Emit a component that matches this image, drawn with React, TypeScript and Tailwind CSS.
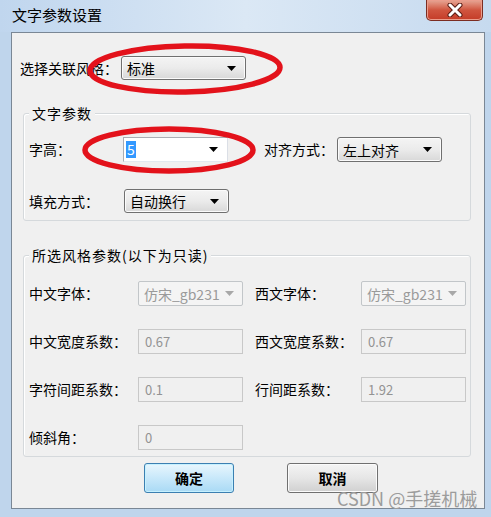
import React from "react";

const font = { fontFamily: '"Noto Sans CJK SC", "Noto Sans", sans-serif' };

function Arrow({ disabled }: { disabled?: boolean }) {
  return (
    <svg width="9" height="5" viewBox="0 0 9 5" className="shrink-0">
      <path d="M0 0 H9 L4.5 5 Z" fill={disabled ? "#a8a8a8" : "#000"} />
    </svg>
  );
}

function Combo({ value, width, height = 24 }: { value: string; width: number; height?: number }) {
  return (
    <div
      className="flex items-center justify-between rounded-[3px] border border-[#707070] bg-linear-to-b from-[#f4f4f4] via-[#ebebeb] to-[#d8d8d8] pl-[5px] pr-[9px] text-[14px] text-black shadow-[inset_0_0_0_1px_#fbfbfb]"
      style={{ width, height }}
    >
      <span className="leading-none">{value}</span>
      <Arrow />
    </div>
  );
}

function ReadCombo({ value }: { value: string }) {
  return (
    <div className="flex h-[25px] w-[105px] items-center justify-between rounded-[2px] border border-[#c2c6c9] bg-[#f4f4f4] pl-[5px] pr-[8px] text-[14px] text-[#9a9a9a]">
      <span className="leading-none">{value}</span>
      <Arrow disabled />
    </div>
  );
}

function ReadBox({ value }: { value: string }) {
  return (
    <div className="flex h-[25px] w-[105px] items-center border border-[#c8c8c8] bg-[#f0f0f0] pl-[6px] text-[13px] text-[#939393]">
      <span className="leading-none">{value}</span>
    </div>
  );
}

function Group({ title, className, children }: { title: string; className: string; children: React.ReactNode }) {
  return (
    <div className={`relative ml-[11px] w-[448px] rounded-[3px] border border-[#d5d9dc] shadow-[inset_1px_1px_0_#ffffff] ${className}`}>
      <span className="absolute -top-[11px] left-[5px] bg-[#f0f0f0] px-[3px] text-[14px] leading-[20px] tracking-[1px] text-black">{title}</span>
      {children}
    </div>
  );
}

export default function App() {
  return (
    <div className="relative h-[517px] w-[491px] overflow-hidden bg-[#bfd5ec]" style={font}>
      {/* title bar */}
      <div className="flex h-[32px] bg-linear-to-r from-[#c0d6ee] via-[#dbe8f5] to-[#c6daef]">
        <span className="ml-[12px] mt-[5px] text-[15px] leading-[20px] text-black">文字参数设置</span>
        <div className="ml-auto mr-[8px] flex h-[21px] w-[57px] items-center justify-center rounded-b-[5px] border border-t-0 border-[#7b2d22] bg-linear-to-b from-[#e6a796] via-[#d0553f] to-[#c43b27] shadow-[inset_0_0_0_1px_#eb9d8c]">
          <svg width="16" height="14" viewBox="0 0 16 14">
            <path d="M3 2 L13 12 M13 2 L3 12" stroke="#5a1d14" strokeWidth="5" strokeLinecap="round" />
            <path d="M3 2 L13 12 M13 2 L3 12" stroke="#ffffff" strokeWidth="3" strokeLinecap="round" />
          </svg>
        </div>
      </div>

      {/* client area */}
      <div className="ml-[11px] flex h-[477px] w-[474px] flex-col border border-[#7a8795] bg-[#f0f0f0] text-[14px] text-black">
        <div className="mt-[23px] flex items-center pl-[8px]">
          <span className="w-[101px]">选择关联风格：</span>
          <Combo value="标准" width={125} />
        </div>

        <Group title="文字参数" className="mt-[33px] h-[108px] pt-[23px]">
          <div className="flex items-center pl-[5px]">
            <span className="w-[94px]">字高：</span>
            <div className="flex h-[25px] w-[105px] items-center justify-between border border-[#abadb3] border-b-[#e3e9ef] border-r-[#dbdfe6] bg-white pl-[2px] pr-[9px]">
              <span className="bg-[#3399ff] px-[1px] text-[14px] leading-[17px] text-white">5</span>
              <Arrow />
            </div>
            <span className="ml-[36px] w-[73px]">对齐方式：</span>
            <Combo value="左上对齐" width={105} height={25} />
          </div>
          <div className="mt-[27px] flex items-center pl-[5px]">
            <span className="w-[95px]">填充方式：</span>
            <Combo value="自动换行" width={105} />
          </div>
        </Group>

        <Group title="所选风格参数(以下为只读)" className="mt-[34px] h-[202px] pt-[25px]">
          <div className="grid grid-cols-[109px_105px_118px_105px] items-center gap-y-[23px] pl-[5px]">
            <span>中文字体：</span>
            <ReadCombo value="仿宋_gb231" />
            <span className="pl-[12px]">西文字体：</span>
            <ReadCombo value="仿宋_gb231" />

            <span>中文宽度系数：</span>
            <ReadBox value="0.67" />
            <span className="pl-[12px]">西文宽度系数：</span>
            <ReadBox value="0.67" />

            <span>字符间距系数：</span>
            <ReadBox value="0.1" />
            <span className="pl-[12px]">行间距系数：</span>
            <ReadBox value="1.92" />

            <span>倾斜角：</span>
            <ReadBox value="0" />
          </div>
        </Group>

        <div className="mt-[6px] flex gap-[53px] pl-[132px]">
          <button className="flex h-[30px] w-[90px] items-center justify-center rounded-[3px] border border-[#3c7fb1] bg-linear-to-b from-[#e8f6fd] via-[#c8e8fa] to-[#a9daf5] text-[14px] font-semibold text-black shadow-[inset_0_0_0_1px_#c6f1ff]">
            确定
          </button>
          <button className="flex h-[30px] w-[91px] items-center justify-center rounded-[3px] border border-[#707070] bg-linear-to-b from-[#f4f4f4] via-[#e6e6e6] to-[#d0d0d0] text-[14px] font-semibold text-black shadow-[inset_0_0_0_1px_#fbfbfb]">
            取消
          </button>
        </div>
      </div>

      {/* red annotation ellipses */}
      <svg className="pointer-events-none absolute left-0 top-0" width="491" height="517">
        <ellipse cx="185" cy="69" rx="95" ry="23" fill="none" stroke="#e3121b" strokeWidth="5.5" transform="rotate(-1 185 69)" />
        <ellipse cx="169" cy="150" rx="84" ry="21" fill="none" stroke="#e3121b" strokeWidth="5.5" />
      </svg>

      {/* watermark */}
      <span className="absolute left-[337px] top-[486px] text-[18px] leading-[24px] text-[#9c9c9c]">CSDN @手搓机械</span>
    </div>
  );
}
